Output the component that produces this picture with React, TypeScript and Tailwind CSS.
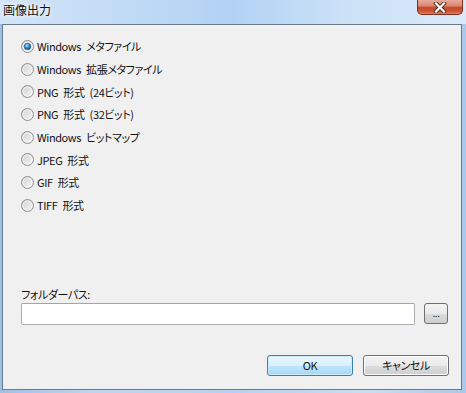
import React from "react"

const options = [
    "Windows メタファイル",
    "Windows 拡張メタファイル",
    "PNG 形式 (24ビット)",
    "PNG 形式 (32ビット)",
    "Windows ビットマップ",
    "JPEG 形式",
    "GIF 形式",
    "TIFF 形式",
]

const Radio = ({ checked, id }: { checked: boolean; id: number }) => (
    <svg width="13" height="13" viewBox="0 0 13 13" className="shrink-0">
        <defs>
            <linearGradient id={`rb${id}`} x1="0" y1="0" x2="1" y2="1">
                <stop offset="0" stopColor="#cfcfcf" />
                <stop offset="1" stopColor="#f7f7f7" />
            </linearGradient>
            <radialGradient id={`rd${id}`} cx="0.4" cy="0.35" r="0.7">
                <stop offset="0" stopColor="#bfe4fb" />
                <stop offset="0.45" stopColor="#3d8fd0" />
                <stop offset="1" stopColor="#10477e" />
            </radialGradient>
        </defs>
        <circle cx="6.5" cy="6.5" r="6" fill={`url(#rb${id})`} stroke="#8c8e90" />
        <circle cx="6.5" cy="6.5" r="4.5" fill="none" stroke="#ffffff" strokeOpacity="0.6" />
        {checked && <circle cx="6.5" cy="6.5" r="3.3" fill={`url(#rd${id})`} stroke="#1d4f7f" strokeWidth="0.6" />}
    </svg>
)

const App = () => {
    return (
        <div className="w-[466px] h-[393px] flex flex-col overflow-hidden bg-[linear-gradient(90deg,#9fc1e6_0%,#bcd6f2_20%,#b3d2f3_50%,#c7ddf4_80%,#a9c8ea_100%)] font-['Noto_Sans_CJK_JP',sans-serif] [font-feature-settings:'palt'] text-[11px] tracking-[-0.4px] [word-spacing:3px] text-[#111111]">
            <div className="h-[24px] flex items-start justify-between bg-[linear-gradient(90deg,#d3e5f8_0%,#c2dbf5_25%,#b2d2f4_50%,#cde2f7_75%,#d9e9f9_100%)]">
                <div className="pl-[3px] pt-[1px] text-[12px] tracking-normal leading-[17px] [text-shadow:0_0_6px_#ffffff,0_0_3px_#ffffff]">画像出力</div>
                <div className="mr-[3px] w-[46px] h-[15px] rounded-b-[5px] border border-t-0 border-[#7e2c1c] bg-[linear-gradient(180deg,#e9a999_0%,#d98a75_40%,#c5462c_55%,#cf5a36_85%,#e08a5e_100%)] flex items-center justify-center">
                    <svg width="14" height="11" viewBox="0 0 14 11">
                        <path d="M3 1.5 L11 9.5 M11 1.5 L3 9.5" stroke="#4b2a24" strokeWidth="4" strokeLinecap="square" />
                        <path d="M3 1.5 L11 9.5 M11 1.5 L3 9.5" stroke="#ffffff" strokeWidth="2.2" strokeLinecap="square" />
                    </svg>
                </div>
            </div>
            <div className="ml-[2px] mr-[4px] mb-[3px] flex-1 border border-[#6b7b8c] bg-[#f0f0f0] flex flex-col pl-[18px] pr-[12px] pt-[10px]">
                <div className="flex flex-col">
                    {options.map((label, i) => (
                        <div key={i} className="h-[22.7px] flex items-center gap-[3px]">
                            <Radio checked={i === 0} id={i} />
                            <span className="leading-[14px]">{label}</span>
                        </div>
                    ))}
                </div>
                <div className="mt-[70px] leading-[14px]">フォルダーパス:</div>
                <div className="mt-[2px] flex items-center gap-[9px]">
                    <div className="w-[394px] h-[22px] rounded-[2px] border border-[#abadb3] border-t-[#a0a4ab] bg-white" />
                    <div className="w-[24px] h-[21px] rounded-[3px] border border-[#707070] bg-[linear-gradient(180deg,#f2f2f2_0%,#ebebeb_50%,#dddddd_51%,#cfcfcf_100%)] flex items-center justify-center text-[10px] leading-none pb-[2px]">...</div>
                </div>
                <div className="mt-[30px] flex justify-end gap-[10px]">
                    <div className="w-[86px] h-[21px] rounded-[3px] border border-[#3c7fb1] bg-[linear-gradient(180deg,#eaf6fd_0%,#d9f0fc_50%,#bee6fd_51%,#a7d9f5_100%)] shadow-[inset_0_0_0_1px_#cdeafb] flex items-center justify-center leading-none">OK</div>
                    <div className="w-[86px] h-[21px] rounded-[3px] border border-[#707070] bg-[linear-gradient(180deg,#f2f2f2_0%,#ebebeb_50%,#dddddd_51%,#cfcfcf_100%)] shadow-[inset_0_0_0_1px_#fcfcfc] flex items-center justify-center leading-none">キャンセル</div>
                </div>
            </div>
        </div>
    )
}

export default App
